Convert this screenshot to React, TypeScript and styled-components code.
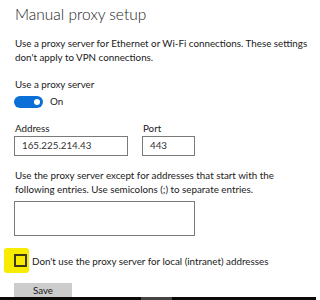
import React from "react";
import styled, { createGlobalStyle } from "styled-components";

const GlobalStyle = createGlobalStyle`
  html, body {
    margin: 0;
    padding: 0;
    background: #ffffff;
  }
  body {
    font-family: Lato, "Noto Sans", sans-serif;
    color: #1a1a1a;
  }
`;

export default function App() {
  return (
    <>
      <GlobalStyle />
      <Window>
        <Content>
          <Title>Manual proxy setup</Title>
          <Paragraph>
            Use a proxy server for Ethernet or Wi-Fi connections. These settings
            don't apply to VPN connections.
          </Paragraph>
          <FieldLabel>Use a proxy server</FieldLabel>
          <ToggleRow>
            <Toggle on>
              <Knob />
            </Toggle>
            <ToggleText>On</ToggleText>
          </ToggleRow>
          <InputsRow>
            <Field>
              <FieldLabel>Address</FieldLabel>
              <TextBox width={114}>165.225.214.43</TextBox>
            </Field>
            <Field>
              <FieldLabel>Port</FieldLabel>
              <TextBox width={53}>443</TextBox>
            </Field>
          </InputsRow>
          <Paragraph className="exceptions">
            Use the proxy server except for addresses that start with the
            following entries. Use semicolons (;) to separate entries.
          </Paragraph>
          <TextArea />
          <CheckRow>
            <Highlight>
              <CheckBox />
            </Highlight>
            <CheckText>
              Don't use the proxy server for local (intranet) addresses
            </CheckText>
          </CheckRow>
          <SaveButton>Save</SaveButton>
        </Content>
        <TaskStrip>
          <StripThumb />
        </TaskStrip>
      </Window>
    </>
  );
}

const Window = styled.div`
  width: 320px;
  height: 300px;
  display: flex;
  flex-direction: column;
  overflow: hidden;
`;

const Content = styled.div`
  flex: 1;
  overflow: hidden;
  padding: 2px 0 0 14px;
  display: flex;
  flex-direction: column;
  align-items: flex-start;

  & > * {
    flex-shrink: 0;
  }
`;

const Title = styled.h1`
  margin: 0;
  font-size: 15.5px;
  font-weight: 300;
  line-height: 24px;
  color: #1a1a1a;
  padding-left: 1px;
`;

const Paragraph = styled.p`
  margin: 10px 0 0;
  font-size: 9.8px;
  line-height: 14px;
  width: 300px;
  padding-left: 1px;

  &.exceptions {
    margin-top: 12px;
    width: 270px;
  }
`;

const FieldLabel = styled.div`
  margin-top: 13px;
  font-size: 9.8px;
  line-height: 14px;
  padding-left: 1px;
`;

const ToggleRow = styled.div`
  display: flex;
  align-items: center;
  gap: 7px;
  margin-top: 4px;
  height: 13px;
`;

const Toggle = styled.div<{ on?: boolean }>`
  width: 29px;
  height: 12px;
  border-radius: 7px;
  background: ${(p) => (p.on ? "#0a6fd6" : "#ffffff")};
  display: flex;
  align-items: center;
  justify-content: ${(p) => (p.on ? "flex-end" : "flex-start")};
  padding: 0 3px;
  box-sizing: border-box;
`;

const Knob = styled.span`
  width: 6px;
  height: 6px;
  border-radius: 50%;
  background: #ffffff;
`;

const ToggleText = styled.span`
  font-size: 9.8px;
  line-height: 13px;
`;

const InputsRow = styled.div`
  display: flex;
  gap: 14px;
`;

const Field = styled.div`
  display: flex;
  flex-direction: column;
`;

const TextBox = styled.div<{ width: number }>`
  width: ${(p) => p.width}px;
  height: 20px;
  box-sizing: border-box;
  border: 1.5px solid #7a7a7a;
  font-size: 9.8px;
  line-height: 17px;
  padding-left: 7px;
  color: #333333;
  margin-top: 1px;
`;

const TextArea = styled.div`
  margin-top: 5px;
  width: 181px;
  height: 35px;
  box-sizing: border-box;
  border: 1.5px solid #7a7a7a;
`;

const CheckRow = styled.div`
  display: flex;
  align-items: center;
  gap: 3px;
  margin: 12px 0 0 -10px;
`;

const Highlight = styled.div`
  width: 25px;
  height: 25px;
  background: #f7ec00;
  border-radius: 3px;
  display: flex;
  align-items: center;
  box-sizing: border-box;
`;

const CheckBox = styled.div`
  width: 13px;
  height: 13px;
  box-sizing: border-box;
  border: 2px solid #3a3a1a;
  margin-left: 10px;
`;

const CheckText = styled.span`
  font-size: 9.8px;
  line-height: 14px;
`;

const SaveButton = styled.button`
  margin-top: 10px;
  width: 58px;
  height: 26px;
  border: none;
  background: #cccccc;
  font-family: inherit;
  font-size: 9.8px;
  line-height: 12px;
  color: #1a1a1a;
  padding: 1px 0 0;
  display: flex;
  justify-content: center;
  align-items: flex-start;
`;

const TaskStrip = styled.div`
  height: 3px;
  width: 316px;
  background: #0a0a0a;
  display: flex;
  padding-left: 141px;
  box-sizing: border-box;
  flex-shrink: 0;
`;

const StripThumb = styled.div`
  width: 31px;
  height: 3px;
  background: #444444;
`;
